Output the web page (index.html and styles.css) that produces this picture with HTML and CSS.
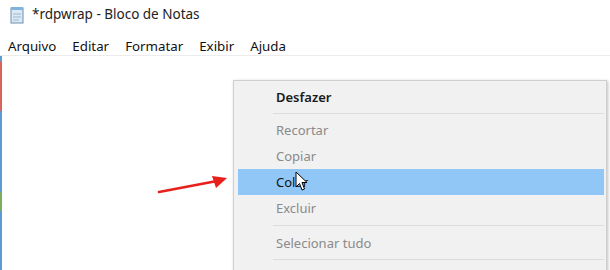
FILE: index.html
```html
<!DOCTYPE html>
<html>
<head>
  <meta charset="UTF-8">
  <title>*rdpwrap - Bloco de Notas</title>
  <link rel="stylesheet" href="styles.css">
</head>
<body>
  <div class="window">
    <div class="titlebar">
      <svg class="app-icon" width="16" height="18" viewBox="0 0 16 18">
        <rect x="2" y="2" width="12" height="15" fill="#dbe9f5" stroke="#6b8fb3"/>
        <rect x="2" y="1" width="12" height="3" fill="#7fb2dc"/>
        <path d="M4 8h8M4 11h8M4 14h6" stroke="#9fb7cc"/>
      </svg>
      <span class="title">*rdpwrap - Bloco de Notas</span>
    </div>

    <div class="menubar">
      <span>Arquivo</span>
      <span>Editar</span>
      <span>Formatar</span>
      <span>Exibir</span>
      <span>Ajuda</span>
    </div>

    <div class="editor">
      <div class="edge"></div>

      <svg class="arrow" width="80" height="24" viewBox="0 0 80 24">
        <path d="M2 20 L60 9" stroke="#e8201c" stroke-width="2.6" stroke-linecap="round"/>
        <path d="M70 6 L55 4 L59 16 Z" fill="#e8201c"/>
      </svg>

      <div class="context-menu">
        <div class="item bold">Desfazer</div>
        <div class="sep"></div>
        <div class="item off">Recortar</div>
        <div class="item off">Copiar</div>
        <div class="item active">Colar</div>
        <div class="item off">Excluir</div>
        <div class="sep wide"></div>
        <div class="item off">Selecionar tudo</div>
        <div class="sep"></div>
        <div class="item">Da direita para a esquerda</div>
      </div>

      <svg class="cursor" width="14" height="21" viewBox="0 0 14 21">
        <path d="M1 1 L1 16 L4.5 12.5 L7 19 L9.5 18 L7 11.5 L12 11.5 Z" fill="#fff" stroke="#000" stroke-width="1" stroke-linejoin="round"/>
      </svg>
    </div>
  </div>
</body>
</html>
```

FILE: styles.css
```css
body {
  margin: 0;
  background-color: #ffffff;
  font-family: "Noto Sans", "Open Sans", sans-serif;
  color: #1a1a1a;
  overflow: hidden;
}
.window {
  display: flex;
  flex-direction: column;
  height: 270px;
}
.titlebar {
  height: 30px;
  display: flex;
  align-items: center;
  gap: 7px;
  padding-left: 9px;
  font-size: 13.5px;
  color: #222;
}
.app-icon {
  margin-top: -1px;
}
.title {
  margin-top: -3px;
}
.menubar {
  display: flex;
  height: 19px;
  padding-top: 6px;
  align-items: center;
  padding-left: 8px;
  gap: 16px;
  font-size: 13.3px;
  color: #111;
  border-bottom: 1px solid #ececec;
}
.editor {
  position: relative;
  flex: 1;
}
.edge {
  position: absolute;
  left: 0;
  top: 0;
  bottom: 0;
  width: 2px;
  background: linear-gradient(#5b9bd5 0, #5b9bd5 5px, #d9655a 6px, #d9655a 54px, #5b9bd5 56px, #5b9bd5 135px, #7cae5c 137px, #7cae5c 154px, #5b9bd5 156px);
}
.arrow {
  position: absolute;
  left: 157px;
  top: 116px;
}
.context-menu {
  position: absolute;
  left: 233px;
  top: 24px;
  width: 366px;
  height: 260px;
  background-color: #f1f1f1;
  border: 1px solid #cfcfcf;
  box-shadow: 1px 1px 3px rgba(0, 0, 0, 0.25);
  padding: 3px 2px 0 4px;
  font-size: 13px;
}
.item {
  height: 26px;
  line-height: 26px;
  padding-left: 38px;
  color: #1a1a1a;
}
.item.bold {
  font-weight: 600;
}
.item.off {
  color: #8a8a8a;
}
.item.active {
  background-color: #91c7f6;
  color: #111;
}
.sep {
  height: 1px;
  margin: 3px 0 3px 35px;
  background-color: #dcdcdc;
}
.sep.wide {
  margin: 4px 0 4px 35px;
}
.cursor {
  position: absolute;
  left: 295px;
  top: 115px;
}
```
